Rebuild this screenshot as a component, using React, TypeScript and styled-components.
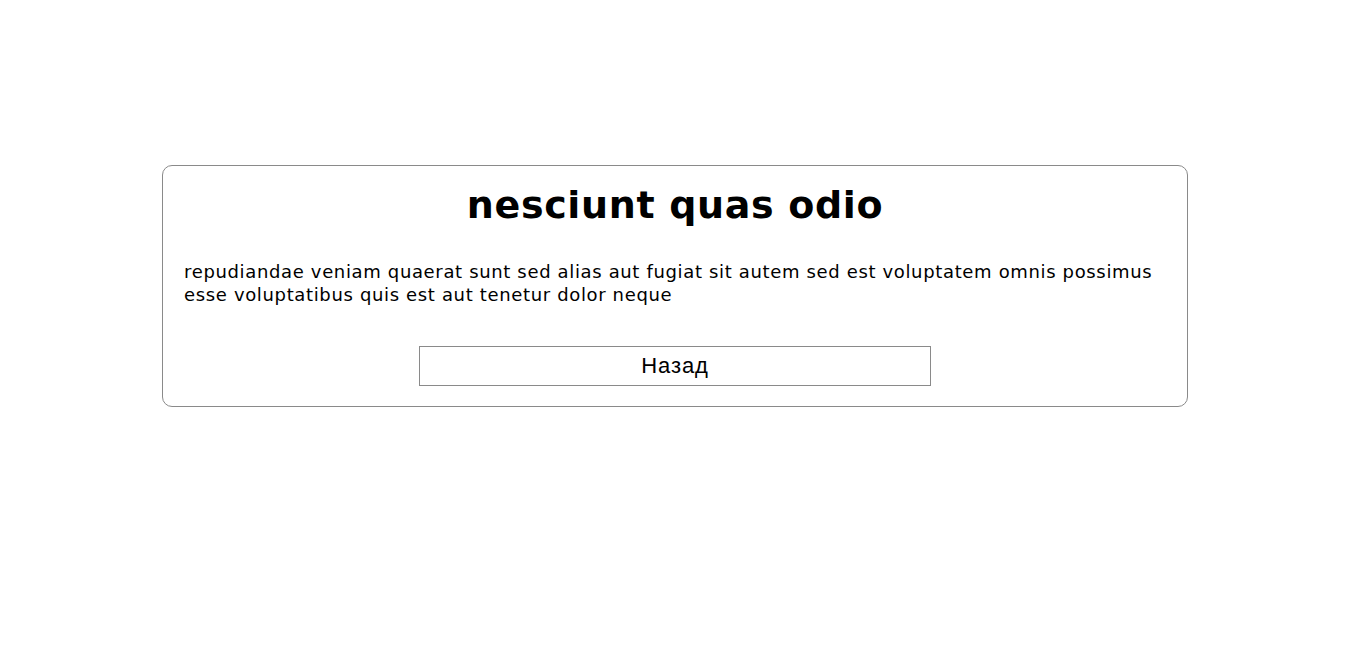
import React from "react";
import styled, { createGlobalStyle } from "styled-components";

const GlobalStyle = createGlobalStyle`
  html, body { margin: 0; padding: 0; background: #ffffff; }
  body { font-family: "DejaVu Sans", "Liberation Sans", sans-serif; color: #000; }
`;

const Page = styled.div`
  display: flex;
  justify-content: center;
  padding-top: 165px;
  padding-left: 3px;
`;

const Card = styled.section`
  width: 982px;
  border: 1px solid #8a8a8a;
  border-radius: 10px;
  padding: 16px 21px 20px;
  display: flex;
  flex-direction: column;
`;

const Title = styled.h1`
  margin: 0;
  text-align: center;
  font-size: 38px;
  font-weight: bold;
  letter-spacing: 0.65px;
  line-height: 46px;
`;

const Text = styled.p`
  margin: 32px 0 0;
  font-size: 18px;
  line-height: 23px;
  letter-spacing: 0.65px;
`;

const BackButton = styled.button`
  align-self: center;
  margin-top: 40px;
  width: 512px;
  height: 40px;
  background: #ffffff;
  border: 1px solid #8a8a8a;
  font-family: "Liberation Sans", Arial, sans-serif;
  font-size: 22px;
  letter-spacing: 0.9px;
  color: #000;
  cursor: pointer;
`;

export default function App() {
  return (
    <>
      <GlobalStyle />
      <Page>
        <Card>
          <Title>nesciunt quas odio</Title>
          <Text>
            repudiandae veniam quaerat sunt sed alias aut fugiat sit autem sed est voluptatem omnis possimus esse voluptatibus quis est aut tenetur dolor neque
          </Text>
          <BackButton type="button">Назад</BackButton>
        </Card>
      </Page>
    </>
  );
}
